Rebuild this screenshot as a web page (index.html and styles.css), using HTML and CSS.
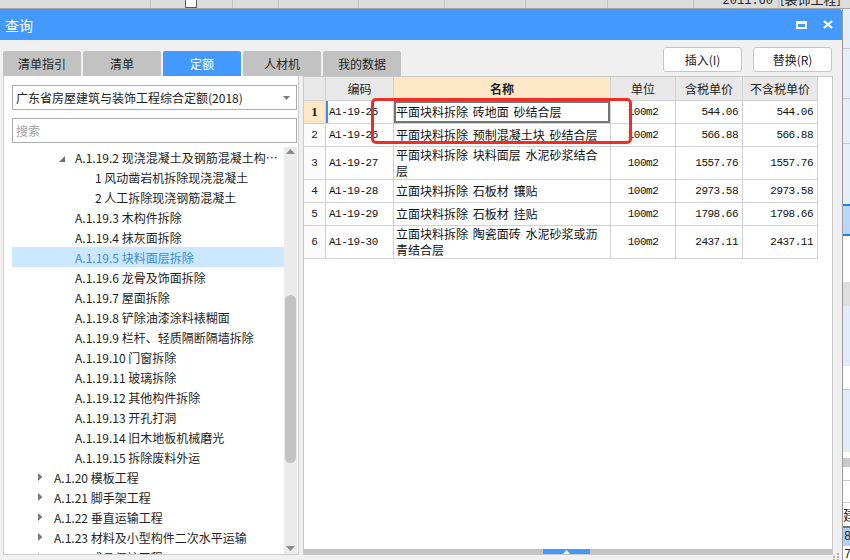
FILE: index.html
```html
<!DOCTYPE html>
<html lang="zh-CN">
<head>
<meta charset="utf-8">
<title>查询</title>
<link rel="stylesheet" href="styles.css">
</head>
<body>
<div class="screen">
  <div class="topstrip">
    <div class="ts-cell w151"></div>
    <div class="ts-cell w82 start"><span class="checkbox"></span></div>
    <div class="ts-cell w46"></div>
    <div class="ts-cell w80"></div>
    <div class="ts-cell w86"></div>
    <div class="ts-cell w81"></div>
    <div class="ts-cell w82"></div>
    <div class="ts-cell w86"></div>
    <div class="ts-cell w85"><span class="ts-text">2011.60</span></div>
    <div class="ts-cell rest start"><span class="ts-text cjk">[装饰工程]</span></div>
  </div>
  <div class="main">
    <div class="dialog">
      <div class="titlebar">
        <span class="title">查询</span>
        <div class="tb-icons">
          <svg width="11" height="8" viewBox="0 0 11 8"><rect x="1" y="1" width="9" height="6" fill="none" stroke="#fff" stroke-width="2"/><rect x="0" y="0" width="11" height="3" fill="#fff"/></svg>
          <svg width="10" height="9" viewBox="0 0 10 9"><path d="M1 1L9 8M9 1L1 8" stroke="#fff" stroke-width="2.2" fill="none"/></svg>
        </div>
      </div>
      <div class="body">
        <div class="toolbar">
          <div class="tabs">
            <div class="tab">清单指引</div>
            <div class="tab">清单</div>
            <div class="tab active">定额</div>
            <div class="tab">人材机</div>
            <div class="tab">我的数据</div>
          </div>
          <div class="actions">
            <div class="btn">插入(I)</div>
            <div class="btn">替换(R)</div>
          </div>
        </div>
        <div class="content">
          <div class="left">
            <div class="select">
              <span>广东省房屋建筑与装饰工程综合定额(2018)</span>
              <svg class="sel-arrow" width="7" height="4" viewBox="0 0 7 4"><polygon points="0,0 7,0 3.5,4" fill="#7a7a7a"/></svg>
            </div>
            <div class="search">搜索</div>
            <div class="tree">
              <div class="tree-list">
                <div class="node lv2"><span class="tw"><svg width="6" height="6" viewBox="0 0 6 6"><polygon points="6,0 6,6 0,6" fill="#6e6e6e"/></svg></span><span class="label">A.1.19.2 现浇混凝土及钢筋混凝土构件拆除</span></div>
                <div class="node lv3"><span class="tw"></span><span class="label">1 风动凿岩机拆除现浇混凝土</span></div>
                <div class="node lv3"><span class="tw"></span><span class="label">2 人工拆除现浇钢筋混凝土</span></div>
                <div class="node lv2"><span class="tw"></span><span class="label">A.1.19.3 木构件拆除</span></div>
                <div class="node lv2"><span class="tw"></span><span class="label">A.1.19.4 抹灰面拆除</span></div>
                <div class="node lv2 selected"><span class="tw"></span><span class="label">A.1.19.5 块料面层拆除</span></div>
                <div class="node lv2"><span class="tw"></span><span class="label">A.1.19.6 龙骨及饰面拆除</span></div>
                <div class="node lv2"><span class="tw"></span><span class="label">A.1.19.7 屋面拆除</span></div>
                <div class="node lv2"><span class="tw"></span><span class="label">A.1.19.8 铲除油漆涂料裱糊面</span></div>
                <div class="node lv2"><span class="tw"></span><span class="label">A.1.19.9 栏杆、轻质隔断隔墙拆除</span></div>
                <div class="node lv2"><span class="tw"></span><span class="label">A.1.19.10 门窗拆除</span></div>
                <div class="node lv2"><span class="tw"></span><span class="label">A.1.19.11 玻璃拆除</span></div>
                <div class="node lv2"><span class="tw"></span><span class="label">A.1.19.12 其他构件拆除</span></div>
                <div class="node lv2"><span class="tw"></span><span class="label">A.1.19.13 开孔打洞</span></div>
                <div class="node lv2"><span class="tw"></span><span class="label">A.1.19.14 旧木地板机械磨光</span></div>
                <div class="node lv2"><span class="tw"></span><span class="label">A.1.19.15 拆除废料外运</span></div>
                <div class="node lv1"><span class="tw"><svg width="5" height="8" viewBox="0 0 5 8"><polygon points="0,0 4.5,4 0,8" fill="#7a7a7a"/></svg></span><span class="label">A.1.20 模板工程</span></div>
                <div class="node lv1"><span class="tw"><svg width="5" height="8" viewBox="0 0 5 8"><polygon points="0,0 4.5,4 0,8" fill="#7a7a7a"/></svg></span><span class="label">A.1.21 脚手架工程</span></div>
                <div class="node lv1"><span class="tw"><svg width="5" height="8" viewBox="0 0 5 8"><polygon points="0,0 4.5,4 0,8" fill="#7a7a7a"/></svg></span><span class="label">A.1.22 垂直运输工程</span></div>
                <div class="node lv1"><span class="tw"><svg width="5" height="8" viewBox="0 0 5 8"><polygon points="0,0 4.5,4 0,8" fill="#7a7a7a"/></svg></span><span class="label">A.1.23 材料及小型构件二次水平运输</span></div>
                <div class="node lv1"><span class="tw"><svg width="5" height="8" viewBox="0 0 5 8"><polygon points="0,0 4.5,4 0,8" fill="#7a7a7a"/></svg></span><span class="label">A.1.24 成品保护工程</span></div>
              </div>
              <div class="vscroll">
                <div class="vs-arrow"><svg width="9" height="5" viewBox="0 0 9 5"><polygon points="0,5 9,5 4.5,0" fill="#8a8a8a"/></svg></div>
                <div class="vs-track"><div class="vs-thumb"></div></div>
                <div class="vs-arrow down"><svg width="9" height="5" viewBox="0 0 9 5"><polygon points="0,0 9,0 4.5,5" fill="#8a8a8a"/></svg></div>
              </div>
            </div>
          </div>
          <div class="right">
            <div class="grid">
              <div class="c hd"></div>
              <div class="c hd">编码</div>
              <div class="c hd name-hd">名称</div>
              <div class="c hd">单位</div>
              <div class="c hd">含税单价</div>
              <div class="c hd">不含税单价</div>

              <div class="c rn cur">1</div>
              <div class="c code cur-code">A1-19-25</div>
              <div class="c name edit">平面块料拆除 砖地面 砂结合层</div>
              <div class="c unit">100m2</div>
              <div class="c num">544.06</div>
              <div class="c num">544.06</div>

              <div class="c rn">2</div>
              <div class="c code">A1-19-26</div>
              <div class="c name">平面块料拆除 预制混凝土块 砂结合层</div>
              <div class="c unit">100m2</div>
              <div class="c num">566.88</div>
              <div class="c num">566.88</div>

              <div class="c rn">3</div>
              <div class="c code">A1-19-27</div>
              <div class="c name">平面块料拆除 块料面层 水泥砂浆结合<br>层</div>
              <div class="c unit">100m2</div>
              <div class="c num">1557.76</div>
              <div class="c num">1557.76</div>

              <div class="c rn">4</div>
              <div class="c code">A1-19-28</div>
              <div class="c name">立面块料拆除 石板材 镶贴</div>
              <div class="c unit">100m2</div>
              <div class="c num">2973.58</div>
              <div class="c num">2973.58</div>

              <div class="c rn">5</div>
              <div class="c code">A1-19-29</div>
              <div class="c name">立面块料拆除 石板材 挂贴</div>
              <div class="c unit">100m2</div>
              <div class="c num">1798.66</div>
              <div class="c num">1798.66</div>

              <div class="c rn">6</div>
              <div class="c code">A1-19-30</div>
              <div class="c name">立面块料拆除 陶瓷面砖 水泥砂浆或沥<br>青结合层</div>
              <div class="c unit">100m2</div>
              <div class="c num">2437.11</div>
              <div class="c num">2437.11</div>
            </div>
            <div class="hscroll">
              <div class="hs-thumb"><svg width="7" height="4" viewBox="0 0 7 4"><polygon points="0,4 7,4 3.5,0" fill="#fff"/></svg></div>
            </div>
            <div class="redbox"></div>
          </div>
        </div>
      </div>
      <svg class="grip" width="6" height="7" viewBox="0 0 6 7"><rect x="4" y="0" width="2" height="2" fill="#b0b0b0"/><rect x="0" y="3" width="2" height="2" fill="#b0b0b0"/><rect x="4" y="3" width="2" height="2" fill="#b0b0b0"/><rect x="0" y="6" width="2" height="1" fill="#b0b0b0"/><rect x="4" y="6" width="2" height="1" fill="#b0b0b0"/></svg>
    </div>
    <div class="appside">
      <div class="as s1"></div>
      <div class="as s2"></div>
      <div class="as s3"></div>
      <div class="as s4"></div>
      <div class="as blue"></div>
      <div class="as s5"></div>
      <div class="as blue"></div>
      <div class="as s6"></div>
      <div class="as s7"></div>
      <div class="as s8"></div>
      <div class="as s9"></div>
      <div class="as s8"></div>
      <div class="as s10"></div>
      <div class="as s11"></div>
      <div class="as s12"></div>
      <div class="as s13"></div>
      <div class="as s14"></div>
      <div class="as s15">建</div>
      <div class="as s16"></div>
      <div class="as s17">8</div>
      <div class="as s18">78</div>
    </div>
  </div>
</div>
</body>
</html>
```

FILE: styles.css
```css
* { box-sizing: border-box; }
html, body { margin: 0; padding: 0; }
body {
  width: 850px;
  height: 560px;
  overflow: hidden;
  font-family: "Noto Sans CJK SC", "Noto Sans", sans-serif;
  font-size: 12px;
  color: #1e1e1e;
  background: #f0f0f0;
}
.screen { width: 850px; height: 560px; display: flex; flex-direction: column; }

/* background app strip at top */
.topstrip {
  height: 9px;
  flex: none;
  display: flex;
  background: #dcdcdc;
  border-bottom: 1px solid #a4a4a4;
  overflow: hidden;
}
.ts-cell {
  flex: none;
  height: 100%;
  border-right: 1px solid #c3c3c3;
  display: flex;
  justify-content: flex-end;
  align-items: flex-start;
  overflow: hidden;
}
.ts-cell.start { justify-content: flex-start; }
.w151 { width: 151px; } .w82 { width: 82px; } .w46 { width: 46px; } .w80 { width: 80px; }
.w86 { width: 86px; } .w81 { width: 81px; } .w85 { width: 85px; }
.rest { flex: 1; border-right: none; }
.checkbox {
  display: block;
  margin-left: 34px;
  width: 12px;
  height: 8px;
  background: #fff;
  border: 1px solid #5a5a5a;
  border-top: none;
}
.ts-text {
  font-family: "Liberation Mono", "Noto Sans CJK SC", monospace;
  font-size: 12px;
  line-height: 12px;
  margin-top: -5px;
  padding-right: 5px;
  white-space: nowrap;
  color: #222;
}
.ts-text.cjk { font-family: "Noto Sans CJK SC", sans-serif; padding: 0 0 0 1px; margin-top: -7px; font-size: 13px; }

.main { flex: 1; display: flex; min-height: 0; }

/* dialog */
.dialog {
  position: relative;
  width: 843px;
  flex: none;
  display: flex;
  flex-direction: column;
  background: #f0f0f0;
  border-right: 1px solid #9a9a9a;
}
.titlebar {
  height: 31px;
  flex: none;
  background: #4499ff;
  color: #fff;
  font-size: 14px;
  display: flex;
  align-items: center;
  padding-left: 5px;
  border-top-right-radius: 3px;
}
.title { flex: 1; }
.tb-icons { display: flex; align-items: center; gap: 16px; padding-right: 9px; }
.tb-icons svg { display: block; }

.body { flex: 1; display: flex; flex-direction: column; min-height: 0; }
.toolbar { height: 36px; flex: none; display: flex; padding: 0 10px 0 3px; }
.tabs { display: flex; gap: 2px; align-self: flex-end; }
.tab {
  width: 78px;
  height: 25px;
  background: #c2c2c2;
  border-radius: 2px 2px 0 0;
  display: flex;
  align-items: center;
  justify-content: center;
  color: #222;
}
.tab.active { background: #4499ff; color: #fff; }
.actions { margin-left: auto; margin-top: 7px; display: flex; gap: 11px; align-self: flex-start; }
.btn {
  width: 79px;
  height: 25px;
  background: #fff;
  border: 1px solid #c6c6c6;
  border-radius: 3px;
  display: flex;
  align-items: center;
  justify-content: center;
  color: #222;
}

.content { height: 479px; flex: none; display: flex; gap: 4px; padding-left: 3px; }

/* left panel */
.left {
  width: 296px;
  flex: none;
  background: #fff;
  border: 1px solid #cfcfcf;
  border-top: none;
  padding: 9px 1px 0 8px;
  display: flex;
  flex-direction: column;
}
.select {
  height: 25px;
  flex: none;
  border: 1px solid #ababab;
  display: flex;
  align-items: center;
  padding-left: 3px;
  color: #222;
}
.sel-arrow { margin-left: auto; margin-right: 6px; display: block; }
.search {
  margin-top: 8px;
  height: 25px;
  flex: none;
  border: 1px solid #ababab;
  display: flex;
  align-items: center;
  padding-left: 3px;
  color: #a3a3a3;
}
.tree { margin-top: 4px; flex: 1; min-height: 0; display: flex; }
.tree-list { flex: 1; min-width: 0; overflow: hidden; }
.node {
  height: 20px;
  display: flex;
  align-items: center;
  white-space: nowrap;
  color: #1e1e1e;
}
.node.lv1 { padding-left: 26px; }
.node.lv2 { padding-left: 47px; }
.node.lv3 { padding-left: 67px; }
.tw { width: 16px; flex: none; display: flex; align-items: center; }
.tw svg { display: block; }
.node.lv2 .tw svg { margin-top: 3px; }
.label { overflow: hidden; text-overflow: ellipsis; min-width: 0; padding-right: 4px; }
.node.selected { background: #cce8ff; color: #3a8be0; }

.vscroll { width: 13px; flex: none; background: #ebebeb; display: flex; flex-direction: column; }
.vs-arrow { height: 12px; flex: none; display: flex; justify-content: center; padding-top: 2px; }
.vs-arrow.down { padding-top: 0; align-items: flex-end; padding-bottom: 3px; }
.vs-arrow svg { display: block; }
.vs-track { flex: 1; }
.vs-thumb { margin: 136px 1px 0 1px; height: 168px; background: #c2c2c2; border-radius: 6px; }

/* right panel */
.right {
  position: relative;
  width: 530px;
  flex: none;
  background: #fff;
  border: 1px solid #c9c9c9;
  display: flex;
  flex-direction: column;
}
.grid {
  display: grid;
  grid-template-columns: 22px 68px 217px 65px 67px 75px;
  grid-template-rows: 24px 23px 23px 33px 23px 23px 33px;
  width: 514px;
}
.c {
  border-right: 1px solid #d2d2d2;
  border-bottom: 1px solid #d2d2d2;
  display: flex;
  align-items: center;
  overflow: hidden;
  white-space: nowrap;
}
.hd { background: #e8e8e8; justify-content: center; color: #222; }
.hd.name-hd { background: #fde7c6; font-weight: bold; }
.rn {
  justify-content: center;
  font-family: "Liberation Mono", monospace;
  font-size: 11px;
  color: #222;
  background: #fbfbfb;
}
.rn.cur { background: #fde7c6; font-family: "Liberation Serif", serif; font-weight: bold; font-size: 13px; }
.code {
  padding-left: 3px;
  font-family: "Liberation Mono", monospace;
  font-size: 11px;
  letter-spacing: -0.5px;
  color: #111;
}
.cur-code { box-shadow: inset 2px 0 0 #3d8cf2; }
.name {
  padding-left: 2px;
  line-height: 16px;
  word-spacing: 2px;
  color: #111;
  white-space: normal;
}
.name.edit { box-shadow: inset 0 0 0 2px #747474; }
.unit {
  justify-content: center;
  font-family: "Liberation Mono", monospace;
  font-size: 11px;
  letter-spacing: -0.5px;
  color: #111;
}
.num {
  justify-content: flex-end;
  padding-right: 4px;
  font-family: "Liberation Mono", monospace;
  font-size: 11px;
  letter-spacing: -0.5px;
  color: #111;
}
.hscroll {
  margin-top: auto;
  height: 5px;
  flex: none;
  background: #c3c3c3;
  display: flex;
}
.hs-thumb {
  margin-left: 239px;
  width: 47px;
  height: 5px;
  background: #4499ff;
  display: flex;
  justify-content: center;
  align-items: flex-end;
}
.hs-thumb svg { display: block; }
.redbox {
  position: absolute;
  left: 67px;
  top: 21px;
  width: 261px;
  height: 46px;
  border: 3px solid #ee2d24;
  border-radius: 5px;
  pointer-events: none;
}
.grip { position: absolute; right: 3px; bottom: 0; display: block; }

/* background app on the right */
.appside { flex: 1; display: flex; flex-direction: column; overflow: hidden; background: #fff; }
.as { flex: none; font-size: 14px; line-height: 18px; white-space: nowrap; color: #222; overflow: hidden; }
.s1 { height: 40px; background: #e4edfa; border-bottom: 1px solid #c9c9c9; }
.s2 { height: 50px; background: #e4edfa; border-bottom: 1px solid #c9c9c9; }
.s3 { height: 45px; background: #e4edfa; border-bottom: 1px solid #c9c9c9; }
.s4 { height: 60px; background: #e4edfa; }
.blue { height: 2px; background: #1f7fe8; }
.s5 { height: 28px; background: #bad6f8; }
.s6 { height: 46px; background: #fff; }
.s7 { height: 24px; background: #dedede; }
.s8 { height: 60px; background: #e1ecfb; }
.s9 { height: 24px; background: #fff; border-bottom: 1px solid #c9c9c9; }
.s10 { height: 2px; background: #dff5d8; }
.s11 { height: 6px; background: #fff; }
.s12 { height: 9px; background: #c9c9c9; }
.s13 { height: 14px; background: #fff; border-bottom: 1px solid #c9c9c9; }
.s14 { height: 22px; background: #fff; border-bottom: 1px solid #c9c9c9; }
.s15 { height: 23px; background: #fff; padding-top: 2px; }
.s16 { height: 2px; background: #777; }
.s17 { height: 18px; background: #b3d1f8; font-family: "Liberation Mono", monospace; font-size: 12px; padding-left: 1px; }
.s18 { height: 20px; background: #fff; font-family: "Liberation Mono", monospace; font-size: 12px; padding-left: 1px; }
```
